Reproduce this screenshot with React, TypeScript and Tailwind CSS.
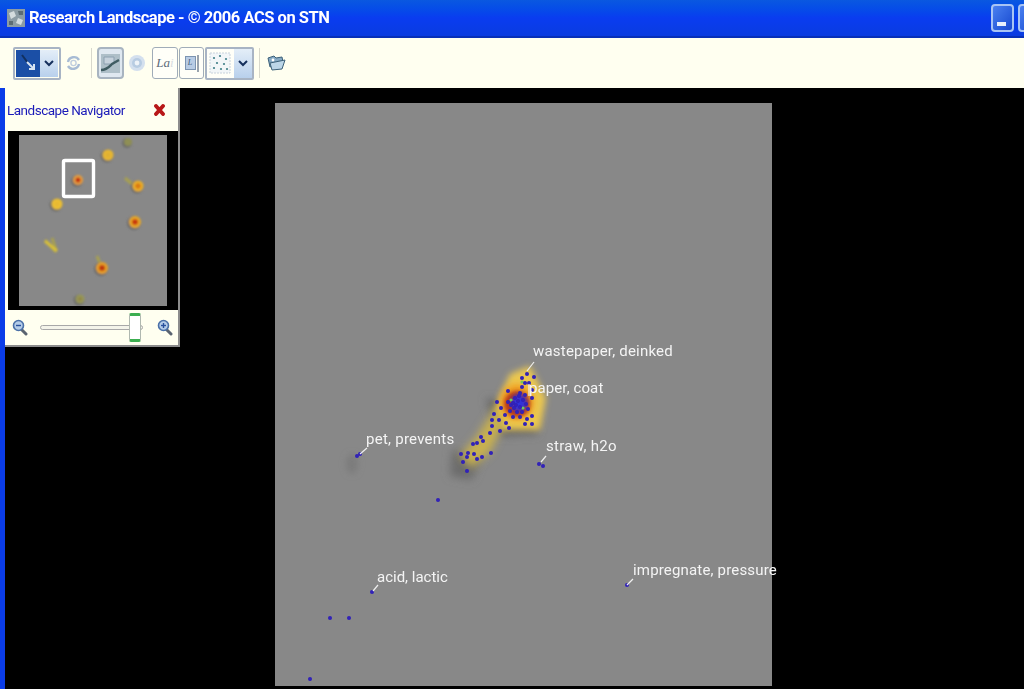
const spots = [
  { x: 128, y: 142, r: 4, c: "#8f8f55", i: "#8f8f55" },
  { x: 108, y: 155, r: 5.5, c: "#e8b830", i: "#e0b030" },
  { x: 78, y: 180, r: 5, c: "#e8a040", i: "#c02808" },
  { x: 138, y: 186, r: 5.5, c: "#ecb028", i: "#d87818" },
  { x: 57, y: 204, r: 5.5, c: "#ecc030", i: "#e8b830" },
  { x: 135, y: 222, r: 6, c: "#e8a828", i: "#c83810" },
  { x: 102, y: 268, r: 6, c: "#e8a028", i: "#c03810" },
  { x: 80, y: 299, r: 4.5, c: "#98985a", i: "#908848" },
];

const dots = [
  [527, 374], [534, 377], [522, 378], [525, 383], [529, 383], [522, 387], [532, 390], [508, 391],
  [520, 393], [532, 398], [497, 402], [501, 408], [508, 402], [494, 414], [492, 420], [499, 420],
  [506, 423], [492, 426], [509, 428], [500, 431], [490, 433], [481, 437], [483, 441], [473, 444],
  [477, 443], [461, 454], [468, 453], [474, 454], [482, 457], [491, 453], [467, 457], [463, 462],
  [477, 459], [467, 471], [525, 424], [532, 424], [527, 419], [532, 416], [513, 417], [520, 417],
  [505, 415], [515, 398], [518, 401], [523, 400], [511, 405], [514, 408], [520, 407], [526, 404],
  [510, 411], [517, 412], [522, 412], [528, 409], [513, 403], [519, 396], [525, 395], [516, 405],
  [539, 464], [543, 466], [357, 456], [360, 454], [438, 500], [372, 592], [330, 618], [349, 618],
  [310, 679], [627, 585],
];

const leaders = [
  [527, 371, 534, 362], [529, 384, 529, 396], [360, 454, 367, 448],
  [541, 462, 546, 456], [373, 591, 378, 585], [627, 585, 633, 579],
];

const labels = [
  { text: "wastepaper, deinked", cls: "left-[258px] top-[236px] tracking-[0.2px]" },
  { text: "paper, coat", cls: "left-[254px] top-[273px] tracking-[0.1px]" },
  { text: "pet, prevents", cls: "left-[91px] top-[324px] tracking-[0.25px]" },
  { text: "straw, h2o", cls: "left-[271px] top-[331px] tracking-[0.3px]" },
  { text: "acid, lactic", cls: "left-[102px] top-[462px]" },
  { text: "impregnate, pressure", cls: "left-[358px] top-[455px] tracking-[0.17px]" },
];

function Magnifier({ plus }: { plus?: boolean }) {
  return (
    <svg width="16" height="17" viewBox="0 0 16 17" className="blur-[0.4px]">
      <path d="M9.5 10.5 L14 15" stroke="#5a6470" strokeWidth="3" strokeLinecap="round" />
      <circle cx="6.5" cy="6.5" r="5" fill="#b4cce8" stroke="#4a70a8" strokeWidth="1.6" />
      <path d="M4 6.5 H9" stroke="#28509c" strokeWidth="1.4" />
      {plus && <path d="M6.5 4 V9" stroke="#28509c" strokeWidth="1.4" />}
    </svg>
  );
}

function Chevron() {
  return (
    <svg width="10" height="7" viewBox="0 0 10 7">
      <path d="M1 1 L5 5 L9 1" fill="none" stroke="#16305c" strokeWidth="2" />
    </svg>
  );
}

function DotsIcon() {
  return (
    <svg width="22" height="22" viewBox="0 0 22 22">
      <rect x="1" y="1" width="20" height="20" fill="#f2f6f8" stroke="#c8d2dc" strokeDasharray="2 1" />
      {[[5, 6], [11, 4], [17, 7], [8, 11], [15, 12], [5, 16], [12, 17], [18, 17]].map(([x, y]) => (
        <circle key={`${x}-${y}`} cx={x} cy={y} r="1.1" fill="#3f7f88" />
      ))}
    </svg>
  );
}

function Toolbar() {
  return (
    <div className="h-[50px] bg-[#fffff0] flex items-center pl-[13px] shrink-0">
      <div className="w-[48px] h-[33px] border-2 border-[#a8b4c4] rounded-[2px] flex p-px bg-[#fffff0]">
        <div className="w-[24px] bg-[#1b4fa6] flex items-center justify-center">
          <svg width="18" height="20" viewBox="0 0 18 20">
            <path d="M3 2 L9 10" stroke="#12305f" strokeWidth="2" />
            <path d="M8 9 L14 15 M10 16 L15 16 L15 11" stroke="#d8e4f2" strokeWidth="2" fill="none" />
          </svg>
        </div>
        <div className="flex-1 bg-gradient-to-b from-[#e4eef8] to-[#b8d0ec] flex items-center justify-center"><Chevron /></div>
      </div>
      <svg className="ml-[4px] blur-[0.4px]" width="17" height="20" viewBox="0 0 17 20">
        <path d="M3 9 A6 6 0 0 1 14 7 M14 11 A6 6 0 0 1 3 13" fill="none" stroke="#a8bcd4" strokeWidth="2.4" />
        <circle cx="8.5" cy="10" r="2.6" fill="none" stroke="#c0cede" strokeWidth="1.4" />
      </svg>
      <div className="w-px h-[30px] bg-[#d8d8cc] ml-[9px]" />
      <div className="ml-[5px] w-[27px] h-[32px] border-2 border-[#a8b4c0] rounded-[4px] bg-[#dfe8f0] flex items-center justify-center">
        <svg width="21" height="21" viewBox="0 0 21 21" className="blur-[0.4px]">
          <rect x="1" y="1" width="19" height="19" fill="#aebfc8" />
          <path d="M4 4 H14 V11 H4 Z" fill="#c6d2dc" stroke="#8ca0b0" />
          <path d="M1 17 C7 17 9 14 12 11 L19 7" fill="none" stroke="#3f5c62" strokeWidth="2.4" />
        </svg>
      </div>
      <svg className="ml-[4px] blur-[0.5px]" width="18" height="20" viewBox="0 0 18 20">
        <circle cx="9" cy="10" r="8" fill="#d4e0ee" />
        <circle cx="9" cy="10" r="5" fill="#b8cce2" />
        <circle cx="9" cy="10" r="2.4" fill="#eef3f8" />
      </svg>
      <div className="ml-[6px] w-[26px] h-[32px] border border-[#a0acb8] rounded-[3px] bg-[#fffff8] flex items-center justify-center">
        <span className="font-['Liberation_Serif',serif] italic text-[13px] text-[#5d6b78]">La<span className="text-[#d8dce0]">i</span></span>
      </div>
      <div className="ml-px w-[25px] h-[32px] border border-[#a0acb8] rounded-[3px] bg-[#fffff8] flex items-center justify-center gap-px">
        <div className="w-[11px] h-[14px] bg-[#b8cce4] border border-[#7c94b0] font-['Liberation_Serif',serif] italic text-[8px] leading-[12px] text-[#3c5878] text-center">L</div>
        <div className="w-[2px] h-[17px] bg-[#9aa4ae]" />
      </div>
      <div className="ml-px w-[49px] h-[33px] border-2 border-[#a8b4c4] rounded-[2px] flex items-center bg-[#fffff8] pl-[2px]">
        <DotsIcon />
        <div className="ml-[3px] w-[18px] h-[29px] bg-gradient-to-b from-[#e4eef8] to-[#b8d0ec] flex items-center justify-center"><Chevron /></div>
      </div>
      <div className="w-px h-[30px] bg-[#d8d8cc] ml-[5px]" />
      <svg className="ml-[7px] blur-[0.3px]" width="19" height="18" viewBox="0 0 19 18">
        <path d="M1 4 L7 2 L9 4 L15 3 L16 8 L3 13 Z" fill="#86aac4" stroke="#3c6078" />
        <path d="M3 9 L18 6 L15 15 L5 16 Z" fill="#bcd6e8" stroke="#3c6078" />
        <circle cx="6" cy="6" r="1.4" fill="#ffffff" />
      </svg>
    </div>
  );
}

function Navigator() {
  return (
    <div className="w-[175px] h-[259px] bg-[#fffff0] border-r-2 border-b-2 border-[#8c8c8c] flex flex-col shrink-0">
      <div className="h-[43px] flex items-center justify-between pl-[2px] pr-[13px]">
        <span className="text-[#1a1ab8] font-['Roboto',sans-serif] text-[13.5px] tracking-[-0.5px] pt-[1px] blur-[0.3px]">Landscape Navigator</span>
        <svg width="11" height="12" viewBox="0 0 11 12" className="blur-[0.3px]">
          <path d="M2 2 L9 10 M9 2 L2 10" stroke="#b81818" strokeWidth="3.8" strokeLinecap="round" />
        </svg>
      </div>
      <div className="mx-[3px] h-[179px] bg-black px-[11px] pt-[4px] pb-[4px] w-[170px]">
        <svg width="148" height="171" viewBox="19 135 148 171" className="block">
          <defs>
            <filter id="soft" x="-60%" y="-60%" width="220%" height="220%">
              <feGaussianBlur stdDeviation="1.1" />
            </filter>
          </defs>
          <rect x="19" y="135" width="148" height="171" fill="#888888" />
          <g filter="url(#soft)">
            <path d="M45 240 L56 252 M52 238 L56 250 M125 178 L132 184 M97 256 L101 266" stroke="#a8a050" strokeWidth="3" />
            <path d="M45 241 L57 251" stroke="#d8c038" strokeWidth="3" />
            {spots.map((s) => (
              <g key={`${s.x}-${s.y}`}>
                <circle cx={s.x - 1} cy={s.y + 1} r={s.r + 1} fill="#6c6c6c" />
                <circle cx={s.x} cy={s.y} r={s.r} fill={s.c} />
                <circle cx={s.x} cy={s.y} r={s.r * 0.5} fill={s.i} />
              </g>
            ))}
          </g>
          <rect x="63.5" y="160.5" width="30" height="36" rx="1.5" fill="none" stroke="#ffffff" strokeWidth="3.4" />
        </svg>
      </div>
      <div className="flex-1 flex items-center pl-[7px]">
        <Magnifier />
        <div className="relative ml-[12px] w-[103px] h-[5px] border border-[#a8a8a8] rounded-full bg-[#f4f4ea]">
          <div className="absolute left-[88px] top-[-13px] w-[12px] h-[29px] bg-white border border-[#b0b8b0] border-y-[3px] border-y-[#3cae50] rounded-[2px]" />
        </div>
        <div className="ml-[14px]"><Magnifier plus /></div>
      </div>
    </div>
  );
}

function Landscape() {
  return (
    <div className="relative ml-[95px] mt-[15px] w-[497px] h-[583px] bg-[#888888] shrink-0">
      <svg width="497" height="583" viewBox="275 103 497 583" className="block">
        <defs>
          <filter id="b4" x="-60%" y="-60%" width="220%" height="220%"><feGaussianBlur stdDeviation="4" /></filter>
          <filter id="b3" x="-60%" y="-60%" width="220%" height="220%"><feGaussianBlur stdDeviation="3" /></filter>
          <filter id="b2" x="-60%" y="-60%" width="220%" height="220%"><feGaussianBlur stdDeviation="2" /></filter>
          <filter id="b1" x="-20%" y="-20%" width="140%" height="140%"><feGaussianBlur stdDeviation="0.5" /></filter>
        </defs>
        <path d="M486 398 L498 436 L538 434 L534 410 Z" fill="#646464" filter="url(#b4)" />
        <path d="M452 450 L450 476 L472 480 L482 455 Z" fill="#6c6c6c" filter="url(#b4)" />
        <ellipse cx="352" cy="464" rx="6" ry="10" fill="#7c7c7c" filter="url(#b3)" />
        <path d="M494 410 L510 374 L530 366 L546 398 L540 430 L500 430 Z" fill="#ecc850" filter="url(#b3)" />
        <path d="M460 456 L476 438 L495 408 L506 420 L490 452 L472 468 Z" fill="#c8b050" filter="url(#b4)" />
        <ellipse cx="517" cy="402" rx="17" ry="18" fill="#f0a020" filter="url(#b3)" />
        <ellipse cx="517" cy="404" rx="13" ry="13" fill="#b83818" filter="url(#b2)" />
        <ellipse cx="519" cy="403" rx="8" ry="9" fill="#3030d8" filter="url(#b2)" />
        <circle cx="511" cy="400" r="1.6" fill="#70c858" />
        <circle cx="523" cy="408" r="1.6" fill="#70c858" />
        <circle cx="522" cy="382" r="1.6" fill="#70c858" />
        <g filter="url(#b1)">
          {dots.map(([x, y]) => (
            <circle key={`${x}-${y}`} cx={x} cy={y} r="2" fill="#3020b8" />
          ))}
        </g>
        {leaders.map(([a, b, c, d]) => (
          <line key={`${a}-${b}`} x1={a} y1={b} x2={c} y2={d} stroke="#f0f0f0" strokeWidth="1.2" />
        ))}
      </svg>
      {labels.map((l) => (
        <span key={l.text} className={`absolute ${l.cls} font-['Roboto',sans-serif] text-[15px] leading-[24px] text-[#f4f4f4] whitespace-nowrap blur-[0.3px]`}>
          {l.text}
        </span>
      ))}
    </div>
  );
}

export default function App() {
  return (
    <div className="w-[1024px] h-[689px] overflow-hidden bg-black flex flex-col">
      <div className="h-[38px] shrink-0 bg-gradient-to-b from-[#0a58e0] via-[#0a3cf0] to-[#0a3ce0] border-b-2 border-[#0830b8] flex items-center pl-[7px]">
        <svg width="18" height="18" viewBox="0 0 18 18" className="blur-[0.4px]">
          <rect width="18" height="18" fill="#8c9ca4" />
          <path d="M2 4 L7 2 L9 7 L4 10 Z M11 9 L16 11 L14 16 L9 14 Z" fill="#d4dcde" />
          <path d="M11 2 H16 V6 H12 Z M2 12 H6 V16 H2 Z" fill="#5c6c74" />
        </svg>
        <span className="ml-[4px] mt-[1px] text-white font-['Roboto',sans-serif] font-bold text-[16.5px] tracking-[-0.47px] whitespace-nowrap blur-[0.3px]">Research Landscape - © 2006 ACS on STN</span>
        <div className="ml-auto flex gap-[4px] -mr-[17px]">
          <div className="w-[23px] h-[28px] rounded-[4px] border-2 border-[#a8c4f4] bg-gradient-to-br from-[#4a80f0] to-[#1848d0] flex items-end pb-[4px] pl-[4px]">
            <div className="w-[9px] h-[4px] bg-[#e8f0fc]" />
          </div>
          <div className="w-[23px] h-[28px] rounded-[4px] border-2 border-[#a8c4f4] bg-gradient-to-br from-[#4a80f0] to-[#1848d0]" />
        </div>
      </div>
      <Toolbar />
      <div className="flex-1 flex min-h-0">
        <div className="w-[5px] bg-[#0a3ce8] shrink-0" />
        <Navigator />
        <Landscape />
      </div>
    </div>
  );
}
